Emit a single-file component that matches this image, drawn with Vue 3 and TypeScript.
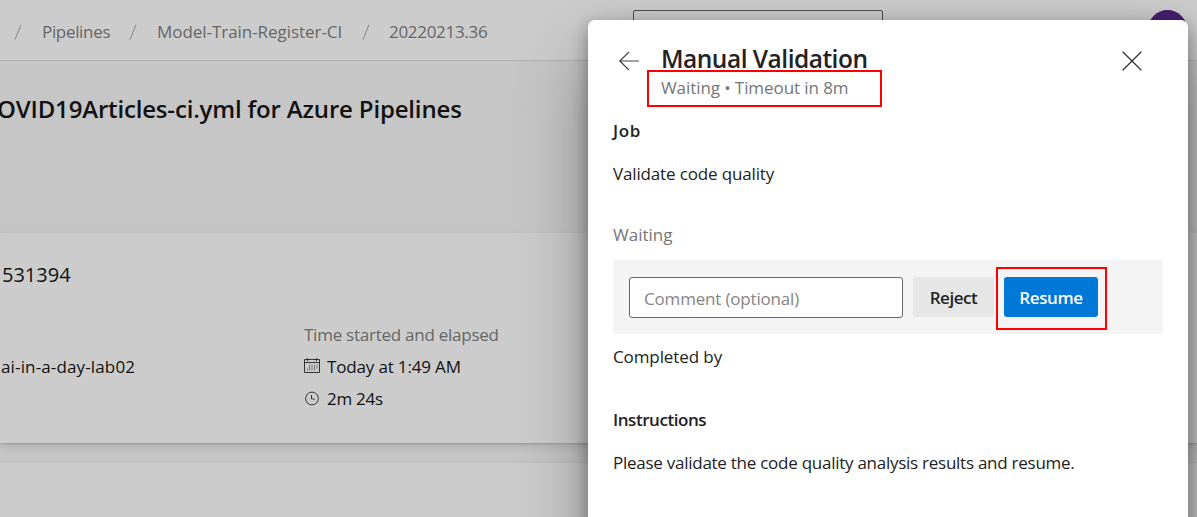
<script setup lang="ts">
import { ref } from 'vue'

interface Crumb {
  label: string
  fit: string
}

const crumbs: Crumb[] = [
  { label: 'Pipelines', fit: 'area' },
  { label: 'Model-Train-Register-CI', fit: 'pipeline' },
  { label: '20220213.36', fit: 'run' },
]
const comment = ref('')
</script>

<template>
  <div class="app">
    <header class="topbar">
      <nav class="crumbs">
        <template v-for="c in crumbs" :key="c.label">
          <svg class="slash" viewBox="0 0 8 16"><path d="M1 15.5 7 .8" /></svg>
          <span class="crumb" :class="c.fit">{{ c.label }}</span>
        </template>
      </nav>
      <div class="search"></div>
      <div class="avatar"></div>
    </header>

    <main class="page">
      <h1 class="title">OVID19Articles-ci.yml for Azure Pipelines</h1>
      <section class="card summary">
        <div class="run-id">531394</div>
        <div class="facts">
          <div class="repo">ai-in-a-day-lab02</div>
          <div class="time">
            <div class="row label">Time started and elapsed</div>
            <div class="row">
              <svg class="ico" viewBox="0 0 16 16">
                <path d="M.5 .5h15v13H.5zM.5 3.500h15M3.500 -1v3M12.500 -1v3" />
                <path class="faint" d="M3.500 9.500v2M5.500 5.500v6M8 5.500v6M10.500 5.500v6M13 5.500v4" />
              </svg>
              <span class="today">Today at 1:49 AM</span>
            </div>
            <div class="row">
              <svg class="ico" viewBox="0 0 16 16"><circle cx="8" cy="7.500" r="6.400" /><path d="M7.500 4v4h3.200" /></svg>
              <span class="elapsed">2m 24s</span>
            </div>
          </div>
        </div>
      </section>
      <section class="card next"></section>
    </main>

    <aside class="panel">
      <div class="panel-head">
        <svg class="back" viewBox="0 0 20 20"><path d="M20 10H.8M10 1 .8 10l9.200 9" /></svg>
        <div class="heading">
          <h2>Manual Validation</h2>
          <p class="status">Waiting • Timeout in 8m</p>
          <div class="mark mark-status"></div>
        </div>
        <svg class="close" viewBox="0 0 20 20"><path d="M.7.7l18.600 18.600M19.300.7.7 19.300" /></svg>
      </div>
      <div class="line strong job">Job</div>
      <div class="line name">Validate code quality</div>
      <div class="line muted state">Waiting</div>
      <div class="review">
        <input v-model="comment" class="field" type="text" placeholder="Comment (optional)" />
        <button class="btn">Reject</button>
        <div class="resume-wrap">
          <button class="btn primary">Resume</button>
          <div class="mark mark-resume"></div>
        </div>
      </div>
      <div class="line done">Completed by</div>
      <div class="line strong instr">Instructions</div>
      <div class="line text">Please validate the code quality analysis results and resume.</div>
    </aside>
  </div>
</template>

<style>
body { margin: 0; overflow: hidden; }
</style>
<style scoped>
.app { position: relative; width: 1197px; height: 517px; overflow: hidden; background: #c6c6c6; color: #111; font: 17px/24px 'Open Sans', 'Noto Sans', sans-serif; white-space: nowrap; }
.app * { box-sizing: border-box; }
h1, h2, p { margin: 0; }
svg { fill: none; stroke: #333; flex: none; overflow: visible; }
.topbar { display: flex; height: 61px; background: #ccc; border-bottom: 1px solid #b3b3b3; }
.crumbs { display: flex; align-items: center; width: 633px; padding: 4px 0 0 14px; color: #666; }
.slash { width: 8px; height: 16px; stroke: #858585; }
.crumb { margin: 0 19px 0 20px; }
.area { width: 68px; letter-spacing: -.33px; }
.pipeline { width: 186px; margin-left: 20px; letter-spacing: -.05px; }
.run { margin-left: 19px; letter-spacing: -.3px; }
.search { width: 250px; height: 40px; margin-top: 10px; border: 1px solid #4c4c4c; border-radius: 2px; }
.avatar { width: 39px; height: 39px; margin: 10px 0 0 265px; border-radius: 50%; background: #46206f; }
.title { margin: 31px 0 0 -3px; font-size: 24px; line-height: 34px; font-weight: 600; letter-spacing: -.17px; }
.card { background: #ccc; box-shadow: 0 4px 9px rgba(0,0,0,.11), 0 1px 2px rgba(0,0,0,.14); }
.summary { height: 210px; margin-top: 107px; padding-top: 28px; }
.run-id { font-size: 20px; line-height: 28px; padding-left: 2px; }
.facts { display: flex; padding-top: 30px; }
.repo { width: 304px; padding: 36px 0 0 1px; letter-spacing: .14px; }
.row { display: flex; align-items: center; height: 32px; gap: 7px; }
.row.label { color: #666; letter-spacing: -.25px; }
.today { letter-spacing: -.16px; }
.elapsed { letter-spacing: -.25px; }
.ico { width: 16px; height: 16px; stroke-width: 1; }
.faint { stroke: #777; }
.next { height: 80px; margin-top: 20px; }
.panel { position: absolute; left: 588px; top: 20px; width: 600px; height: 560px; padding: 0 25px; border-radius: 7px; background: #fff; color: #222; box-shadow: 0 32px 72px rgba(0,0,0,.33), 0 6px 18px rgba(0,0,0,.36); }
.panel-head { display: flex; height: 99px; padding: 23px 21px 0 6px; }
.back { width: 20px; height: 20px; margin-top: 8px; stroke: #444; stroke-width: 1.200; }
.heading { position: relative; flex: 1; margin-left: 22px; }
h2 { font-size: 24.500px; line-height: 32px; font-weight: 600; letter-spacing: -.5px; }
.status { margin-top: 1px; color: #767676; line-height: 24px; letter-spacing: -.08px; }
.close { width: 20px; height: 20px; margin-top: 8px; stroke-width: 1.300; }
.mark { position: absolute; border: 2px solid #f00; pointer-events: none; }
.mark-status { left: -14px; top: 27px; width: 235px; height: 37px; }
.line { height: 24px; }
.strong { font-weight: 600; }
.muted { color: #767676; }
.job { letter-spacing: .6px; }
.name { margin-top: 19px; letter-spacing: -.15px; }
.state { margin-top: 37px; }
.review { display: flex; gap: 10px; height: 74px; margin-top: 13px; padding: 17px 16px; background: #f4f4f4; }
.field { width: 274px; height: 41px; margin: 0; padding: 2px 14px 0; background: #fff; border: 1px solid #666; border-radius: 3px; outline: 0; font: inherit; letter-spacing: -.18px; }
.field::placeholder { color: #858585; opacity: 1; }
.btn { width: 81px; height: 40px; padding: 2px 0 0; border: 0; border-radius: 3px; background: #e6e6e6; color: #222; font: 600 17px/24px 'Open Sans', 'Noto Sans', sans-serif; letter-spacing: -.45px; }
.resume-wrap { position: relative; }
.primary { width: 94px; background: #0078d7; color: #fff; letter-spacing: -.4px; }
.mark-resume { left: -8px; top: -10px; width: 111px; height: 63px; }
.done { margin-top: 11px; letter-spacing: -.1px; }
.instr { margin-top: 39px; letter-spacing: -.45px; }
.text { margin-top: 19px; letter-spacing: -.26px; }
</style>
